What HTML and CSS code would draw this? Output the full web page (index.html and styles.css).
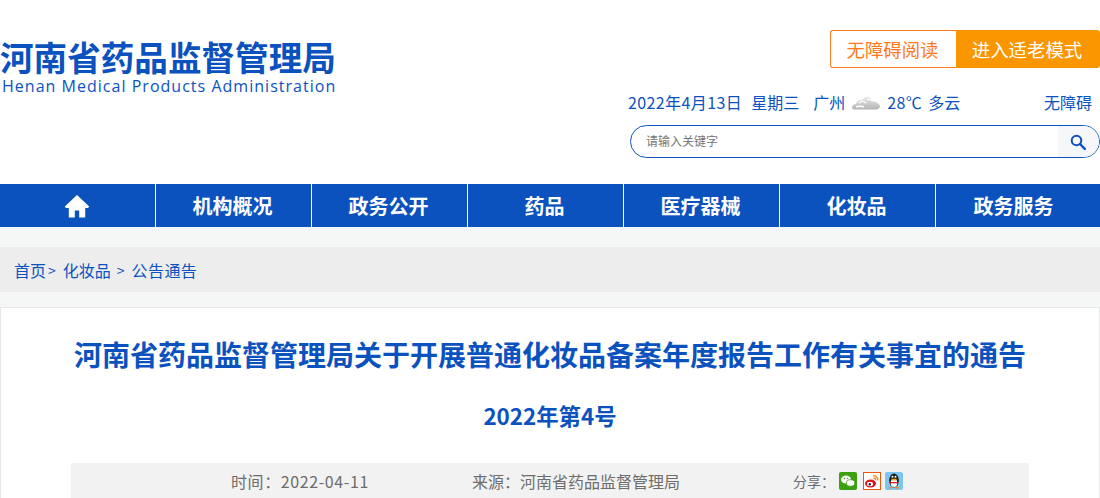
FILE: index.html
```html
<!DOCTYPE html>
<html lang="zh-CN">
<head>
<meta charset="utf-8">
<title>河南省药品监督管理局</title>
<link rel="stylesheet" href="styles.css">
</head>
<body>
<header class="header">
  <div class="logo">
    <div class="logo-cn">河南省药品监督管理局</div>
    <div class="logo-en">Henan Medical Products Administration</div>
  </div>
  <div class="tools">
    <div class="mode-btns">
      <a class="btn-outline">无障碍阅读</a>
      <a class="btn-fill">进入适老模式</a>
    </div>
    <div class="status">
      <span class="date">2022年4月13日</span>
      <span class="week">星期三</span>
      <span class="city">广州</span>
      <svg class="cloud" viewBox="0 0 30 16" width="30" height="16">
        <defs><linearGradient id="cg" x1="0" y1="0" x2="0" y2="1"><stop offset="0" stop-color="#e8e8e8"/><stop offset="1" stop-color="#b4b4b4"/></linearGradient></defs>
        <path d="M1 14c0-2.500 2-4 4-4 1-3 4-5 6.500-4 1.500-3 6-4 8.500-1.500 1 1 1.500 2 1.500 3 3-.5 6.500 1.500 7.500 4.500 0 2-2 3.500-4 3.500H5c-2 0-4-.5-4-1.500z" fill="url(#cg)"/>
        <path d="M8 9c2-2 5-2 7 0M16 6c2-1 4-1 5 1M5 13c3-1 6-1 8 0" fill="none" stroke="#fff" stroke-width="1.500"/>
      </svg>
      <span class="temp">28℃</span>
      <span class="sky">多云</span>
      <a class="access">无障碍</a>
    </div>
    <div class="search">
      <span class="search-text">请输入关键字</span>
      <span class="search-btn">
        <svg viewBox="0 0 16 16" width="16" height="16"><circle cx="6.500" cy="6.500" r="4.800" fill="none" stroke="#0c52bf" stroke-width="2"/><path d="M10 10l4.800 4.800" stroke="#0c52bf" stroke-width="2.400" stroke-linecap="round"/></svg>
      </span>
    </div>
  </div>
</header>
<nav class="nav">
  <a class="nav-item"><svg viewBox="0 0 26 24" width="26" height="24"><path d="M13 1L0.800 12.500 2 14h2.800v9.500h6V16.500h4.400v7h6V14H24l1.200-1.500z" fill="#fff"/></svg></a>
  <a class="nav-item">机构概况</a>
  <a class="nav-item">政务公开</a>
  <a class="nav-item">药品</a>
  <a class="nav-item">医疗器械</a>
  <a class="nav-item">化妆品</a>
  <a class="nav-item nav-last">政务服务</a>
</nav>
<div class="crumb">
  <a>首页</a><span class="sep-a">&gt;</span><a>化妆品</a><span class="sep-b">&gt;</span><a class="crumb-last">公告通告</a>
</div>
<main class="card">
  <h1 class="title">河南省药品监督管理局关于开展普通化妆品备案年度报告工作有关事宜的通告</h1>
  <h2 class="number">2022年第4号</h2>
  <div class="info">
    <span class="time">时间：2022-04-11</span>
    <span class="source">来源：河南省药品监督管理局</span>
    <span class="share">分享：</span>
    <svg class="share-icon" viewBox="0 0 18 18" width="18" height="18"><rect width="18" height="18" rx="2" fill="#3aa00f"/><ellipse cx="7" cy="7.500" rx="5" ry="4" fill="#fff"/><ellipse cx="11.500" cy="11" rx="4.200" ry="3.300" fill="#fff" stroke="#3aa00f" stroke-width=".8"/><circle cx="5.500" cy="6.500" r=".7" fill="#3aa00f"/><circle cx="8.500" cy="6.500" r=".7" fill="#3aa00f"/></svg>
    <svg class="share-icon share-weibo" viewBox="0 0 18 18" width="18" height="18"><rect x=".5" y=".5" width="17" height="17" fill="#fff" stroke="#e8590c"/><ellipse cx="7.500" cy="11.500" rx="5.500" ry="4" fill="#d8141c"/><ellipse cx="7" cy="12" rx="3" ry="2.200" fill="#fff"/><circle cx="6.800" cy="12.200" r="1.200" fill="#222"/><path d="M10 3.500a5 5 0 0 1 5 5M10.500 6a2.500 2.500 0 0 1 2.500 2.500" fill="none" stroke="#f08a1d" stroke-width="1.300"/></svg>
    <svg class="share-icon" viewBox="0 0 18 18" width="18" height="18"><rect width="18" height="18" rx="2" fill="#7cc6f2"/><ellipse cx="9" cy="8.500" rx="4.800" ry="7" fill="#1c1c1c"/><ellipse cx="9" cy="11" rx="3.300" ry="4" fill="#fff"/><circle cx="7.500" cy="4.800" r="1" fill="#fff"/><circle cx="10.500" cy="4.800" r="1" fill="#fff"/><path d="M6 6.800h6l-1.200 1.700H7.200z" fill="#f5a81c"/><path d="M4 15h4l-1 1.500H4zM10 15h4v1.500h-3z" fill="#f08a1d"/><path d="M5 10h8v1.300H5z" fill="#d8141c"/></svg>
  </div>
</main>
</body>
</html>
```
FILE: styles.css
```css
* { box-sizing: border-box; }
html, body { margin: 0; height: 498px; overflow: hidden; }
body {
  background: #f5f7f7;
  font-family: "Noto Sans CJK SC", "Liberation Sans", sans-serif;
  color: #0c52bf;
}
.header {
  height: 184px;
  background: #fff;
  display: flex;
  justify-content: space-between;
}
.logo { padding-top: 36px; }
.logo-cn {
  font-size: 33.600px;
  line-height: 42px;
  font-weight: 700;
  white-space: nowrap;
}
.logo-en {
  font-family: "Open Sans", "Liberation Sans", sans-serif;
  font-size: 16px;
  line-height: 16px;
  letter-spacing: 1.020px;
  padding-left: 2px;
  white-space: nowrap;
}
.tools { width: 470px; padding-top: 30px; }
.mode-btns { display: flex; justify-content: flex-end; height: 38px; font-size: 18.400px; line-height: 38px; }
.btn-outline {
  width: 126px;
  text-align: center;
  color: #ff7a1f;
  border: 1px solid #ff7a1f;
  border-right: 0;
  border-radius: 3px 0 0 3px;
  line-height: 36px;
  padding-right: 2px;
}
.btn-fill {
  width: 144px;
  text-align: center;
  color: #fff;
  background: #fa9600;
  border-radius: 0 3px 3px 0;
  padding-right: 2px;
}
.status {
  display: flex;
  align-items: center;
  height: 22px;
  margin-top: 23px;
  font-size: 16px;
  white-space: nowrap;
  margin-left: -2px;
}
.date { letter-spacing: 0.400px; }
.week { margin-left: 9px; }
.city { margin-left: 14px; }
.cloud { margin-left: 6px; }
.temp { margin-left: 6px; letter-spacing: 0.400px; }
.sky { margin-left: 6px; }
.access { margin-left: auto; margin-right: 8px; }
.search {
  height: 33px;
  margin-top: 12px;
  display: flex;
  align-items: center;
  justify-content: space-between;
  border: 1px solid #0c52bf;
  border-radius: 17px;
  overflow: hidden;
  background: #fff;
}
.search-text { padding: 0 0 2px 15px; font-size: 12px; color: #757575; }
.search-btn {
  width: 41px;
  height: 100%;
  display: flex;
  align-items: center;
  justify-content: center;
  background: #f5f7f8;
  padding-right: 2px;
}
.nav {
  height: 43px;
  display: flex;
  background: #0c52bf;
}
.nav-item {
  width: 156px;
  display: flex;
  align-items: center;
  justify-content: center;
  padding-right: 2px;
  color: #fff;
  font-size: 20px;
  font-weight: 700;
  border-right: 1px solid #fff;
}
.nav-last { border-right: 0; padding-right: 1px; }
.crumb {
  height: 45px;
  margin-top: 20px;
  padding-left: 14px;
  display: flex;
  align-items: center;
  background: #ededed;
  font-size: 16px;
  white-space: nowrap;
}
.crumb-last { letter-spacing: 0.400px; }
.sep-a { margin: 0 7px 0 2px; font-size: 14px; }
.sep-b { margin: 0 7px 0 6px; font-size: 14px; }
.card {
  margin-top: 15px;
  height: 191px;
  padding: 0 70px;
  background: #fff;
  border: 1px solid #e6e8e8;
  border-bottom: 0;
  overflow: hidden;
}
.title {
  margin: 0;
  padding-top: 25px;
  text-align: center;
  font-size: 28px;
  line-height: 42px;
  font-weight: 700;
  white-space: nowrap;
}
.number {
  margin: 0;
  padding-top: 23px;
  text-align: center;
  font-size: 22.400px;
  line-height: 34px;
  font-weight: 700;
}
.info {
  margin-top: 31px;
  height: 36px;
  padding: 0 0 1px 160px;
  display: flex;
  align-items: center;
  background: #f2f2f2;
  color: #6d6d6d;
  font-size: 16px;
  white-space: nowrap;
}
.time { width: 241px; letter-spacing: 0.600px; }
.source { width: 321px; }
.share { width: 46px; font-size: 14px; }
.share-icon { margin-right: 6px; flex: none; }
.share-weibo { margin-right: 4px; }
```
